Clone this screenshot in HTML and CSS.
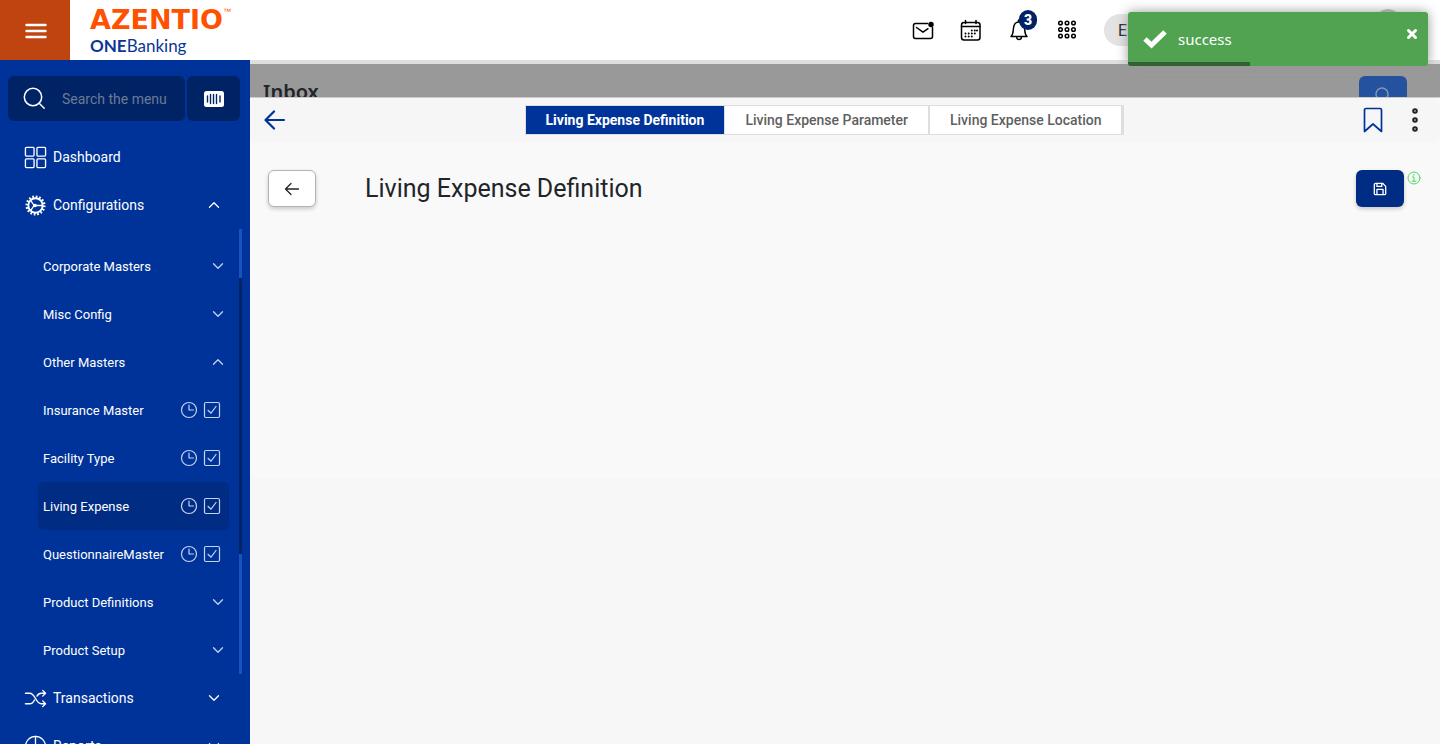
FILE: index.html
```html
<!DOCTYPE html>
<html lang="en">
<head>
<meta charset="utf-8">
<meta name="viewport" content="width=device-width, initial-scale=1">
<title>ONEBanking - Living Expense Definition</title>
<link rel="stylesheet" href="styles.css">
</head>
<body>
<svg class="defs" aria-hidden="true">
  <symbol id="down" viewBox="0 0 12 12"><path d="M1.5 3.8 6 8.2l4.500-4.400"/></symbol>
  <symbol id="up" viewBox="0 0 12 12"><path d="M1.500 8.200 6 3.800l4.500 4.400"/></symbol>
  <symbol id="clock" viewBox="0 0 18 18"><circle cx="9" cy="9" r="7.500"/><path d="M9 4v5h4.500"/></symbol>
  <symbol id="check" viewBox="0 0 18 18"><rect x="1.500" y="1.500" width="15" height="15" rx="1.500"/><path d="m5 9.300 3 2.900 5-6.700"/></symbol>
</svg>
<header class="topbar">
  <button class="burger" aria-label="Toggle menu"><svg width="22" height="16" viewBox="0 0 22 16"><path d="M1.500 2h19M1.500 8h19M1.500 14h19"/></svg></button>
  <div class="brand">
    <div class="brand-name">AZENTIO<span class="tm">™</span></div>
    <div class="brand-product"><b>ONE</b>Banking</div>
  </div>
  <nav class="tools" aria-label="Tools">
    <button class="tool" aria-label="Mail"><svg width="24" height="24" viewBox="0 0 24 24"><path d="M16.500 5.500H4.500A2 2 0 0 0 2.500 7.500v11a2 2 0 0 0 2 2h15a2 2 0 0 0 2-2v-9M5.500 9.500l6.500 4.700 5-3.500"/><circle class="solid" cx="20" cy="6.500" r="2"/></svg></button>
    <button class="tool" aria-label="Calendar"><svg width="24" height="24" viewBox="0 0 24 24"><rect x="2.500" y="4.500" width="18.500" height="17.500" rx="2.500"/><path d="M2.500 8.500h18.500M6.500 2.500v3M17 2.500v3"/><path class="dots" d="M12.800 12.500h.01M15.800 12.500h.01M18 12.500h.01M6.500 15.500h.01M9.700 15.500h.01M12.800 15.500h.01M15.800 15.500h.01M6.500 18.500h.01M9.700 18.500h.01M12.800 18.500h.01"/></svg></button>
    <button class="tool" aria-label="Notifications, 3 new"><svg width="24" height="24" viewBox="0 0 24 24"><path d="M11.500 3.500V2M4 18.500c2.300-2 2-5 2.500-8.500.5-4 2.500-6 5.500-6s5 2 5.500 6c.5 3.500.2 6.500 2.500 8.500ZM9.500 19c.3 3.400 4.700 3.400 5 0"/></svg><span class="badge">3</span></button>
    <button class="tool apps" aria-label="Applications"><svg width="24" height="24" viewBox="0 0 24 24"><g id="row"><circle cx="5.500" cy="5" r="1.800"/><circle cx="12" cy="5" r="1.800"/><circle cx="18.500" cy="5" r="1.800"/></g><use href="#row" y="6.500"/><use href="#row" y="13"/></svg></button>
    <div class="user"><span>E</span><i class="avatar"></i></div>
  </nav>
</header>

<div class="shell">
  <aside class="sidebar">
    <div class="search-row">
      <label class="search"><svg width="24" height="24" viewBox="0 0 24 24"><circle cx="10" cy="10" r="8.700"/><path d="m16.200 16.200 5 5"/></svg><input type="text" placeholder="Search the menu" aria-label="Search the menu"></label>
      <button class="scan" aria-label="Scan"><svg width="22" height="18" viewBox="0 0 22 18"><rect x="1" y="1" width="20" height="16" rx="2.500"/><path d="M4.500 6v6M7.500 4.500v9M10.500 4.500v9M13.500 4.500v9M17 6v6"/></svg></button>
    </div>
    <nav class="menu" aria-label="Main menu">
      <a class="item" href="#"><svg class="icon" viewBox="0 0 24 24"><rect x="1.500" y="1.500" width="9" height="9" rx="1"/><rect x="13.500" y="1.500" width="9" height="9" rx="1"/><rect x="1.500" y="13.500" width="9" height="9" rx="1"/><rect x="13.500" y="13.500" width="9" height="9" rx="1"/></svg><span>Dashboard</span></a>
      <a class="item" href="#"><svg class="icon" viewBox="0 0 24 24"><circle class="teeth" cx="12" cy="12" r="9"/><circle class="ring" cx="12" cy="12" r="7.500"/><path d="M6.800 6.500 10.500 12l-3.700 5.500M10.500 12h8.500"/><circle cx="11.500" cy="12" r="1.200"/></svg><span>Configurations</span><svg class="chev"><use href="#up"/></svg></a>
      <div class="submenu">
        <div class="sublist">
          <a class="sub" href="#"><span>Corporate Masters</span><svg class="chev"><use href="#down"/></svg></a>
          <a class="sub" href="#"><span>Misc Config</span><svg class="chev"><use href="#down"/></svg></a>
          <a class="sub" href="#"><span>Other Masters</span><svg class="chev"><use href="#up"/></svg></a>
          <a class="sub leaf" href="#"><span>Insurance Master</span><svg class="mini"><use href="#clock"/></svg><svg class="mini"><use href="#check"/></svg></a>
          <a class="sub leaf" href="#"><span>Facility Type</span><svg class="mini"><use href="#clock"/></svg><svg class="mini"><use href="#check"/></svg></a>
          <a class="sub leaf current" href="#"><span>Living Expense</span><svg class="mini"><use href="#clock"/></svg><svg class="mini"><use href="#check"/></svg></a>
          <a class="sub leaf" href="#"><span>QuestionnaireMaster</span><svg class="mini"><use href="#clock"/></svg><svg class="mini"><use href="#check"/></svg></a>
          <a class="sub" href="#"><span>Product Definitions</span><svg class="chev"><use href="#down"/></svg></a>
          <a class="sub" href="#"><span>Product Setup</span><svg class="chev"><use href="#down"/></svg></a>
        </div>
        <div class="track"><div class="thumb"></div></div>
      </div>
      <a class="item" href="#"><svg class="icon" viewBox="0 0 24 24"><path d="M1.500 6.500h4.500c6 0 6 11 12 11h4M1.500 17.500h4.500c2.500 0 4-2 5-4M13.500 9.500c1-1.800 2.500-3 4.500-3h4M19.500 3.500l3 3-3 3M19.500 14.500l3 3-3 3"/></svg><span>Transactions</span><svg class="chev"><use href="#down"/></svg></a>
      <a class="item" href="#"><svg class="icon" viewBox="0 0 24 24"><circle cx="12" cy="12" r="10.500"/><path d="M12 1.500V12h10.500M12 12l-7 7.500"/></svg><span>Reports</span><svg class="chev"><use href="#down"/></svg></a>
    </nav>
  </aside>

  <main class="main">
    <div class="backdrop">
      <h2>Inbox</h2>
      <button class="find" aria-label="Search inbox"><svg width="18" height="18" viewBox="0 0 18 18"><circle cx="8" cy="8" r="6"/><path d="m12.500 12.500 4 4"/></svg></button>
    </div>
    <section class="panel">
      <div class="panel-bar">
        <button class="plain" aria-label="Close panel"><svg width="22" height="20" viewBox="0 0 22 20"><path d="M20 10H2M10 1.500 1.500 10l8.500 8.500"/></svg></button>
        <div class="tabs" role="tablist">
          <button class="tab active" role="tab" aria-selected="true">Living Expense Definition</button>
          <button class="tab" role="tab">Living Expense Parameter</button>
          <button class="tab" role="tab">Living Expense Location</button>
        </div>
        <div class="bar-actions">
          <button class="plain" aria-label="Bookmark"><svg width="20" height="26" viewBox="0 0 20 26"><path d="M1.500 24.500V3a1.500 1.500 0 0 1 1.500-1.500h14A1.500 1.500 0 0 1 18.500 3v21.500L10 17Z"/></svg></button>
          <button class="plain more" aria-label="More"><svg width="10" height="26" viewBox="0 0 10 26"><circle cx="5" cy="4" r="1.800"/><circle cx="5" cy="13" r="1.800"/><circle cx="5" cy="22" r="1.800"/></svg></button>
        </div>
      </div>
      <div class="title-row">
        <button class="back" aria-label="Back"><svg width="16" height="14" viewBox="0 0 16 14"><path d="M14.500 7H1.500M7 1.500 1.500 7 7 12.500"/></svg></button>
        <h1>Living Expense Definition</h1>
        <button class="save" aria-label="Save"><svg width="14" height="14" viewBox="0 0 16 16"><path d="M3 1.500h8L14.500 5v8A1.500 1.500 0 0 1 13 14.500H3A1.500 1.500 0 0 1 1.500 13V3A1.500 1.500 0 0 1 3 1.500ZM4.500 1.500V5H10V2M4.500 14V8.500h7V14"/></svg></button>
        <svg class="info" width="14" height="14" viewBox="0 0 14 14" role="img" aria-label="Information"><circle cx="7" cy="7" r="6"/><path d="M5.500 6H7v4M5 10.200h4M6.800 3.300v1"/></svg>
      </div>
    </section>
  </main>
</div>

<div class="toast" role="status">
  <svg width="26" height="20" viewBox="0 0 26 20"><path d="M3 10 9.500 16 23 3"/></svg>
  <span>success</span>
  <button aria-label="Close"><svg width="12" height="12" viewBox="0 0 12 12"><path d="m2.500 2.500 7 7M9.500 2.500l-7 7"/></svg></button>
  <div class="progress"></div>
</div>
</body>
</html>
```

FILE: styles.css
```css
* { box-sizing: border-box; }
body {
  margin: 0;
  height: 100vh;
  display: flex;
  flex-direction: column;
  overflow: hidden;
  font-family: Roboto, "Liberation Sans", sans-serif;
  color: #212529;
  background: #f7f7f7;
}
button { border: 0; padding: 0; background: none; font: inherit; color: inherit; cursor: pointer; }
svg { display: block; flex: none; fill: none; stroke: currentColor; stroke-width: 1.5; stroke-linecap: round; stroke-linejoin: round; }
.defs { position: absolute; width: 0; height: 0; }

.topbar {
  flex: none;
  height: 60px;
  display: flex;
  background: #fff;
  position: relative;
}
.burger { width: 70px; padding: 1px 0 0 1px; display: grid; place-items: center; background: #c0440f; color: #fff; }
.burger svg { stroke-width: 2.4; }
.brand { padding: 5px 0 0 20px; }
.brand-name {
  display: flex;
  font: bold 27px/29px "DejaVu Sans", sans-serif;
  color: #ff5200;
}
.tm { font: 8px/14px "Liberation Sans", sans-serif; }
.brand-product { font: 17px/23px Lato, sans-serif; color: #0a3699; }
.tools { margin-left: auto; display: flex; align-items: center; gap: 24px; padding-right: 36px; }
.tool { position: relative; color: #000; }
.tool svg { stroke-width: 1.5; }
.tool .solid { fill: #000; }
.tool .dots { stroke-width: 2; }
.badge {
  position: absolute;
  top: -8px;
  right: -6px;
  width: 18px;
  height: 20px;
  border-radius: 10px;
  background: #002366;
  color: #fff;
  font-weight: 900;
  font-size: 14px;
  line-height: 20px;
}
.user {
  display: flex;
  align-items: center;
  justify-content: space-between;
  width: 300px;
  height: 32px;
  margin-left: 1px;
  padding-left: 14px;
  border-radius: 16px;
  background: #e3e3e3;
  font-size: 16px;
}
.avatar { width: 32px; height: 42px; border-radius: 50%; background: #b3b3b3; }

.shell { flex: 1; min-height: 0; display: flex; }
.sidebar { flex: none; width: 250px; overflow: hidden; background: #003399; color: #fff; }
.search-row { display: flex; gap: 2px; padding: 16px 10px 12px 8px; }
.search {
  flex: 1;
  min-width: 0;
  display: flex;
  align-items: center;
  gap: 15px;
  height: 45px;
  padding-left: 15px;
  border-radius: 6px;
  background: #002366;
}
.search input {
  min-width: 0;
  flex: 1;
  padding: 0;
  border: 0;
  outline: 0;
  background: none;
  color: #fff;
  font: 14px Roboto, sans-serif;
}
.search input::placeholder { color: #6c7a94; opacity: 1; }
.scan { width: 53px; display: grid; place-items: center; border-radius: 6px; background: #002366; }
.scan rect { fill: #fff; stroke: none; }
.scan path { stroke: #002366; stroke-width: 1.4; }
a { color: inherit; text-decoration: none; }
.item { display: flex; align-items: center; height: 48px; padding: 0 30px 0 24px; font-size: 14px; }
.icon { width: 23px; height: 23px; margin-right: 6px; stroke-width: 1.4; }
.ring { stroke-width: 2; }
.teeth { stroke-width: 3; stroke-dasharray: 1.700 1.834; stroke-linecap: butt; }
.chev { width: 12px; height: 12px; margin-left: auto; stroke-width: 1.3; }
.submenu { display: flex; justify-content: space-between; padding: 0 8px 0 38px; }
.sublist { width: 191px; padding: 13px 0 0; }
.sub {
  display: flex;
  align-items: center;
  height: 48px;
  padding: 0 5px;
  border-radius: 5px;
  font-size: 13px;
}
.sub .chev { color: #c5d3f0; }
.leaf { padding-right: 8px; gap: 5px; }
.leaf span { flex: 1; }
.mini { width: 18px; height: 18px; stroke-width: 1.2; color: #c5d3f0; }
.current { background: #002c84; }
.track { width: 3px; padding-top: 49px; background: #1a53bd; }
.thumb { height: 276px; background: #002366; }

.main { flex: 1; min-width: 0; display: flex; flex-direction: column; }
.backdrop {
  flex: none;
  display: flex;
  justify-content: space-between;
  height: 38px;
  padding: 12px 33px 0 13px;
  overflow: hidden;
  border-top: 4px solid #dedede;
  border-bottom: 1px solid #ccc;
  background: #999;
}
.backdrop h2 { margin: 0; font: 600 20px/32px "Noto Sans", sans-serif; }
.find { width: 48px; height: 37px; display: grid; place-items: center; border-radius: 6px; background: #25529e; color: #8795b0; }
.panel { flex: 1; background: linear-gradient(#f9f9f9 380px, #f7f7f7 380px); }
.panel-bar {
  display: flex;
  align-items: center;
  justify-content: space-between;
  height: 44px;
  padding: 0 20px 0 14px;
  border-radius: 6px;
  background: #f6f6f6;
}
.plain { color: #003399; }
.plain svg { stroke-width: 2.2; }
.bar-actions { display: flex; gap: 27px; }
.bar-actions .plain svg { stroke-width: 1.700; }
.bar-actions .more svg { color: #222; stroke-width: 2; }
.tabs { display: flex; border: 1px solid #dedede; }
.tab {
  height: 28px;
  padding: 0 20px;
  border-right: 2px solid #dedede;
  background: #fff;
  color: #5f5f5f;
  font-size: 14px;
  font-weight: 500;
}
.active { border-right-width: 1px; background: #003399; color: #fff; font-weight: 700; }
.title-row { display: flex; align-items: flex-start; padding: 28px 19px 0 18px; }
.back, .save { width: 48px; height: 37px; display: grid; place-items: center; border-radius: 6px; box-shadow: 0 2px 4px #0003; }
.back { border: 1px solid #adb5bd; background: #fff; }
.back svg { stroke-width: 1.3; }
.title-row h1 { margin: 0 auto 0 49px; font-size: 25px; font-weight: 400; line-height: 38px; }
.save { background: #002c84; color: #fff; }
.info { margin: 1px 0 0 3px; color: #4bd964; stroke-width: 1; }

.toast {
  position: absolute;
  top: 12px;
  right: 12px;
  width: 300px;
  height: 54px;
  display: flex;
  align-items: center;
  gap: 10px;
  padding: 0 10px 0 14px;
  border-radius: 3px;
  overflow: hidden;
  background: #51a351;
  color: #fff;
  font: 15px "Noto Sans", sans-serif;
  box-shadow: 0 0 12px #999;
}
.toast > svg { stroke-width: 5; stroke-linecap: butt; stroke-linejoin: miter; }
.toast button { margin: 0 0 10px auto; }
.toast button svg { stroke-width: 3; }
.progress { position: absolute; left: 0; bottom: 0; width: 122px; height: 4px; background: #316231; }
```
